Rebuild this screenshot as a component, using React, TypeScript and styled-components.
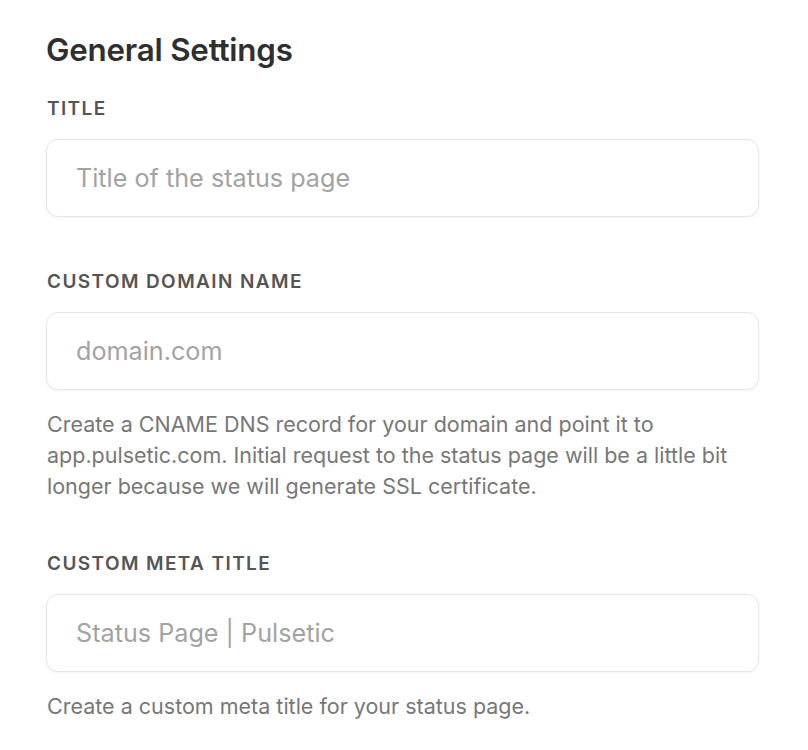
import React from 'react';
import styled, { createGlobalStyle } from 'styled-components';

const Global = createGlobalStyle`
  html, body {
    margin: 0;
    padding: 0;
    background: #fff;
  }
  body {
    font-family: Inter, "Noto Sans", sans-serif;
    -webkit-font-smoothing: antialiased;
  }
`;

const Page = styled.div`
  width: 713px;
  padding: 30px 0 0 46px;
`;

const Heading = styled.h2`
  margin: 0 0 27px;
  font-size: 31.3px;
  line-height: 40px;
  font-weight: 600;
  color: #2f2f2f;
  letter-spacing: -0.2px;
`;

const Field = styled.div`
  display: flex;
  flex-direction: column;
  margin-bottom: 53px;

  &:last-child {
    margin-bottom: 0;
  }
`;

const Label = styled.label`
  font-size: 19px;
  line-height: 24px;
  font-weight: 600;
  letter-spacing: 1.4px;
  text-transform: uppercase;
  color: #555;
  margin: 0 0 18px 1px;
`;

const Input = styled.input`
  box-sizing: border-box;
  width: 100%;
  height: 78px;
  padding: 0 29px;
  border: 1px solid #e6e6e6;
  border-radius: 12px;
  background: #fff;
  box-shadow: 0 1px 3px rgba(0, 0, 0, 0.05);
  font-family: inherit;
  font-size: 25.2px;
  color: #333;
  outline: none;

  &::placeholder {
    color: #a3a3a3;
  }
`;

const Help = styled.p`
  margin: 19px 0 -3px 1px;
  font-size: 21.5px;
  line-height: 31px;
  color: #777;
`;

export default function App() {
  return (
    <>
      <Global />
      <Page>
        <Heading>General Settings</Heading>
        <Field>
          <Label>Title</Label>
          <Input placeholder="Title of the status page" />
        </Field>
        <Field>
          <Label>Custom Domain Name</Label>
          <Input placeholder="domain.com" />
          <Help>
            Create a CNAME DNS record for your domain and point it to
            app.pulsetic.com. Initial request to the status page will be a little bit
            longer because we will generate SSL certificate.
          </Help>
        </Field>
        <Field>
          <Label>Custom Meta Title</Label>
          <Input placeholder="Status Page | Pulsetic" />
          <Help>Create a custom meta title for your status page.</Help>
        </Field>
      </Page>
    </>
  );
}
